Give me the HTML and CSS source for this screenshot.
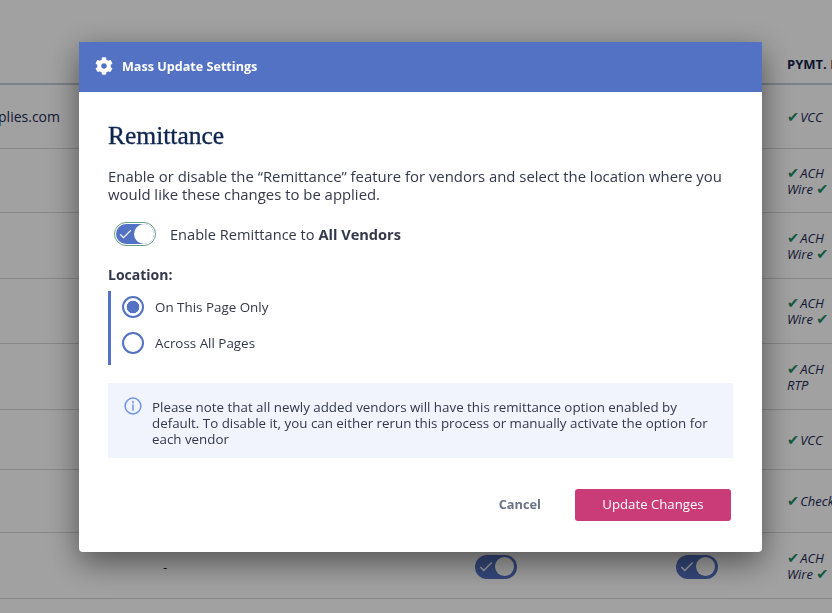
FILE: index.html
```html
<!DOCTYPE html>
<html lang="en">
<head>
<meta charset="utf-8">
<title>Mass Update Settings</title>
<link rel="stylesheet" href="styles.css">
</head>
<body>
<div class="table">
  <div class="row head"><span></span><span></span><span></span><span></span><span></span><span class="th">PYMT. METHODS</span></div>
  <div class="row r64"><span class="email">supplies.com</span><span></span><span></span><span></span><span></span><span class="pay"><i class="ck">✔</i>VCC</span></div>
  <div class="row r64"><span></span><span></span><span></span><span></span><span></span><span class="pay"><i class="ck">✔</i>ACH<br>Wire <i class="ck">✔</i></span></div>
  <div class="row r66"><span></span><span></span><span></span><span></span><span></span><span class="pay"><i class="ck">✔</i>ACH<br>Wire <i class="ck">✔</i></span></div>
  <div class="row r65"><span></span><span></span><span></span><span></span><span></span><span class="pay"><i class="ck">✔</i>ACH<br>Wire <i class="ck">✔</i></span></div>
  <div class="row r66"><span></span><span></span><span></span><span></span><span></span><span class="pay"><i class="ck">✔</i>ACH<br>RTP</span></div>
  <div class="row r60"><span></span><span></span><span></span><span></span><span></span><span class="pay"><i class="ck">✔</i>VCC</span></div>
  <div class="row r63"><span></span><span></span><span></span><span></span><span></span><span class="pay"><i class="ck">✔</i>Check</span></div>
  <div class="row r66"><span></span><span></span><span class="dash">-</span>
    <span class="bg-toggle"><svg class="bg-check" viewBox="0 0 16 12"><path d="M1.5 6.5 5.5 10.5 14.5 1.5"/></svg><b class="bg-knob"></b></span>
    <span class="bg-toggle"><svg class="bg-check" viewBox="0 0 16 12"><path d="M1.5 6.5 5.5 10.5 14.5 1.5"/></svg><b class="bg-knob"></b></span>
    <span class="pay"><i class="ck">✔</i>ACH<br>Wire <i class="ck">✔</i></span></div>
</div>

<div class="overlay">
  <section class="modal">
    <header class="modal-head">
      <svg class="gear" viewBox="0 0 512 512"><path d="M487.4 315.7l-42.6-24.6c4.3-23.2 4.3-47 0-70.2l42.6-24.6c4.9-2.8 7.1-8.6 5.5-14-11.1-35.6-30-67.8-54.7-94.6-3.8-4.1-10-5.1-14.8-2.3L380.8 110c-17.9-15.4-38.5-27.3-60.8-35.1V25.8c0-5.6-3.9-10.5-9.4-11.7-36.7-8.2-74.3-7.8-109.2 0-5.5 1.2-9.4 6.1-9.4 11.7V75c-22.2 7.9-42.8 19.8-60.8 35.1L88.7 85.5c-4.9-2.8-11-1.9-14.8 2.3-24.7 26.7-43.6 58.9-54.7 94.6-1.7 5.4.6 11.2 5.5 14L67.3 221c-4.3 23.2-4.3 47 0 70.2l-42.6 24.6c-4.9 2.8-7.1 8.6-5.5 14 11.1 35.6 30 67.8 54.7 94.6 3.8 4.1 10 5.1 14.8 2.3l42.6-24.6c17.9 15.4 38.5 27.3 60.8 35.1v49.2c0 5.6 3.9 10.5 9.4 11.7 36.7 8.2 74.3 7.8 109.2 0 5.5-1.2 9.4-6.1 9.4-11.7v-49.2c22.2-7.9 42.8-19.8 60.8-35.1l42.6 24.6c4.9 2.8 11 1.9 14.8-2.3 24.7-26.7 43.6-58.9 54.7-94.6 1.5-5.5-.7-11.3-5.6-14.1zM256 336c-44.1 0-80-35.9-80-80s35.9-80 80-80 80 35.9 80 80-35.9 80-80 80z"/></svg>
      <h2 class="modal-title">Mass Update Settings</h2>
    </header>
    <div class="modal-body">
      <h1 class="heading">Remittance</h1>
      <p class="intro">Enable or disable the “Remittance” feature for vendors and select the location where you would like these changes to be applied.</p>
      <div class="enable">
        <span class="toggle"><svg class="toggle-check" viewBox="0 0 16 12"><path d="M1.5 6.5 5.5 10.5 14.5 1.5"/></svg><b class="knob"></b></span>
        <span class="enable-label">Enable Remittance to <strong>All Vendors</strong></span>
      </div>
      <div class="loc-label">Location:</div>
      <div class="radios">
        <div class="radio-row"><span class="radio on"></span><span>On This Page Only</span></div>
        <div class="radio-row"><span class="radio"></span><span>Across All Pages</span></div>
      </div>
      <div class="note">
        <svg class="info" viewBox="0 0 18 18"><circle cx="9" cy="9" r="7.9"/><path d="M9 8v5.2"/><path d="M9 4.6v1.3"/></svg>
        <p class="note-text">Please note that all newly added vendors will have this remittance option enabled by default. To disable it, you can either rerun this process or manually activate the option for each vendor</p>
      </div>
      <div class="actions">
        <span class="cancel">Cancel</span>
        <span class="primary">Update Changes</span>
      </div>
    </div>
  </section>
</div>
</body>
</html>
```
FILE: styles.css
```css
* { box-sizing: border-box; }
html, body { margin: 0; height: 100%; }
body {
  background: #fff;
  font-family: "Open Sans", "Noto Sans", sans-serif;
  color: #1c2340;
  overflow: hidden;
  width: 832px;
  height: 613px;
}
.table { display: flex; flex-direction: column; }
.row {
  display: grid;
  grid-template-columns: 60px 103px 312px 201px 111px 1fr;
  align-items: center;
  border-bottom: 1px solid #d6d6d6;
  flex: none;
  overflow: hidden;
}
.head { height: 85px; border-bottom: 2px solid #c3ced8; padding-top: 45px; }
.r64 { height: 64px; }
.r66 { height: 66px; }
.r65 { height: 65px; }
.r60 { height: 60px; }
.r63 { height: 63px; }
.th { font-size: 13px; font-weight: 700; color: #16244d; white-space: nowrap; }
.email { font-size: 14px; white-space: nowrap; display: flex; justify-content: flex-end; overflow: hidden; color: #1c2a55; }
.pay { font-size: 13px; font-style: italic; line-height: 16px; white-space: nowrap; color: #1c2a55; }
.ck { font-family: "DejaVu Sans", sans-serif; font-size: 14.5px; line-height: 14px; color: #1f8a60; margin-right: 1px; }
.dash { font-size: 13px; margin-top: 2px; }
.bg-toggle {
  width: 42px; height: 24px; margin-top: 2px; border-radius: 12px; background: #5472c4;
  display: flex; align-items: center; justify-content: space-between; padding: 0 3px 0 4px;
}
.bg-check { width: 14px; height: 11px; fill: none; stroke: #fff; stroke-width: 1.6; }
.bg-knob { width: 19px; height: 19px; border-radius: 50%; background: #fff; }

.overlay { position: fixed; inset: 0; background: rgba(0,0,0,.37); }
.modal {
  width: 683px; height: 510px; margin: 42px 0 0 79px;
  background: #fff; border-radius: 0 0 4px 4px;
  box-shadow: 0 10px 32px rgba(0,0,0,.5);
  display: flex; flex-direction: column;
}
.modal-head {
  height: 50px; background: #5472c4; color: #fff; flex: none;
  display: flex; align-items: center; gap: 9px; padding: 0 0 2px 16px;
}
.gear { width: 18px; height: 18px; fill: #fff; }
.modal-title { margin: 0; font-size: 12.6px; font-weight: 700; }
.modal-body { padding: 30px 29px 0; display: flex; flex-direction: column; flex: 1; }
.heading {
  margin: 0; font-family: "Liberation Serif", serif; font-weight: 400;
  font-size: 25.5px; line-height: 28px; color: #0f2550; -webkit-text-stroke: .35px #0f2550;
}
.intro { margin: 17px 0 0; font-size: 14.9px; line-height: 18px; color: #33384a; }
.enable { display: flex; align-items: center; margin: 20px 0 0 7px; height: 22px; }
.toggle {
  width: 38px; height: 20px; margin-left: 1px; border-radius: 10px; background: #5472c4;
  outline: 1px solid #6c9e84; outline-offset: 1px;
  display: flex; align-items: center; justify-content: space-between; padding: 0 0 0 3px;
}
.toggle-check { width: 13px; height: 10px; fill: none; stroke: #fff; stroke-width: 1.6; }
.knob { width: 20px; height: 20px; border-radius: 50%; background: #fff; }
.enable-label { margin-left: 16px; font-size: 14.6px; color: #33384a; }
.enable-label strong { font-weight: 700; }
.loc-label { margin-top: 20px; font-size: 14px; font-weight: 700; line-height: 20px; color: #33384a; }
.radios {
  margin-top: 6px; height: 74px; border-left: 3px solid #5472c4;
  padding: 5px 0 0 11px; display: flex; flex-direction: column; gap: 14px;
}
.radio-row { display: flex; align-items: center; gap: 11px; height: 22px; font-size: 13.4px; color: #33384a; }
.radio {
  width: 22px; height: 22px; border-radius: 50%; border: 2px solid #5472c4; background: #fff;
}
.radio.on { background: radial-gradient(circle, #5472c4 0 6px, #fff 6.6px); }
.note {
  margin-top: 18px; height: 75px; background: #f1f4fd;
  display: flex; align-items: flex-start; padding: 16px 20px 0 16px; gap: 10px;
}
.info { width: 18px; height: 18px; flex: none; margin-top: -2px; fill: none; stroke: #6d95e4; stroke-width: 1.5; stroke-linecap: round; }
.note-text { margin: 0; font-size: 13.35px; line-height: 16px; color: #33384a; }
.actions { display: flex; justify-content: flex-end; align-items: center; margin-top: 31px; padding-right: 2px; }
.cancel { font-size: 12.8px; font-weight: 700; color: #6c7288; margin: 0 34px 2px 0; }
.primary {
  width: 156px; height: 32px; border-radius: 3px; background: #c93c78; color: #fff; padding-bottom: 2px;
  display: flex; align-items: center; justify-content: center; font-size: 13.2px; font-weight: 500;
}
```
